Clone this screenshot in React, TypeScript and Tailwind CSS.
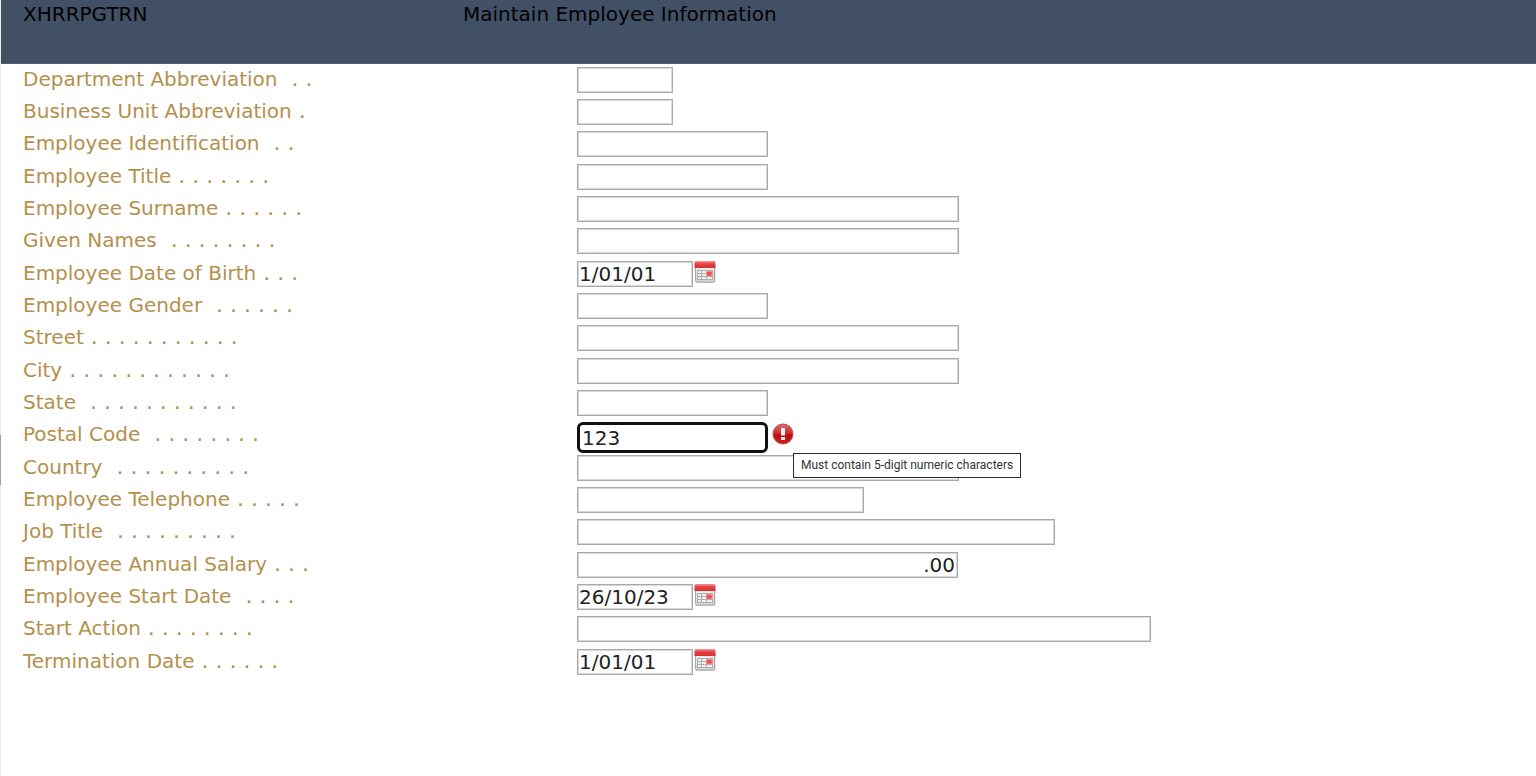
type Field = {
    id: string
    label: string
    dots: string
    width: string
    value?: string
    kind?: "date" | "amount" | "error"
}

const fields: Field[] = [
    { id: "department", label: "Department Abbreviation", dots: "  . .", width: "w-24" },
    { id: "businessUnit", label: "Business Unit Abbreviation", dots: " .", width: "w-24" },
    { id: "employeeId", label: "Employee Identification", dots: "  . .", width: "w-[191px]" },
    { id: "title", label: "Employee Title", dots: " . . . . . . .", width: "w-[191px]" },
    { id: "surname", label: "Employee Surname", dots: " . . . . . .", width: "w-[382px]" },
    { id: "givenNames", label: "Given Names", dots: "  . . . . . . . .", width: "w-[382px]" },
    { id: "birthDate", label: "Employee Date of Birth", dots: " . . .", width: "w-[116px]", value: "1/01/01", kind: "date" },
    { id: "gender", label: "Employee Gender", dots: "  . . . . . .", width: "w-[191px]" },
    { id: "street", label: "Street", dots: " . . . . . . . . . . .", width: "w-[382px]" },
    { id: "city", label: "City", dots: " . . . . . . . . . . . .", width: "w-[382px]" },
    { id: "state", label: "State", dots: "  . . . . . . . . . . .", width: "w-[191px]" },
    { id: "postalCode", label: "Postal Code", dots: "  . . . . . . . .", width: "w-[191px]", value: "123", kind: "error" },
    { id: "country", label: "Country", dots: "  . . . . . . . . . .", width: "w-[382px]" },
    { id: "telephone", label: "Employee Telephone", dots: " . . . . .", width: "w-[287px]" },
    { id: "jobTitle", label: "Job Title", dots: "  . . . . . . . . .", width: "w-[478px]" },
    { id: "salary", label: "Employee Annual Salary", dots: " . . .", width: "w-[381px]", value: ".00", kind: "amount" },
    { id: "startDate", label: "Employee Start Date", dots: "  . . . .", width: "w-[116px]", value: "26/10/23", kind: "date" },
    { id: "startAction", label: "Start Action", dots: " . . . . . . . .", width: "w-[574px]" },
    { id: "terminationDate", label: "Termination Date", dots: " . . . . . .", width: "w-[116px]", value: "1/01/01", kind: "date" },
]

const CalendarIcon = () => (
    <svg viewBox="0 0 22 24" className="w-[22px] h-6" aria-hidden="true">
        <defs>
            <linearGradient id="calTop" x1="0" y1="0" x2="0" y2="1">
                <stop offset="0" stopColor="#f29a9a" />
                <stop offset="0.4" stopColor="#e34545" />
                <stop offset="1" stopColor="#d92c2c" />
            </linearGradient>
            <linearGradient id="calBody" x1="0" y1="0" x2="0" y2="1">
                <stop offset="0" stopColor="#f8f8f8" />
                <stop offset="1" stopColor="#d4d4d4" />
            </linearGradient>
        </defs>
        <rect x="1" y="4" width="20.500" height="19" rx="2" fill="#cfcfcf" />
        <rect x="1.500" y="2.500" width="19" height="19.500" rx="2" fill="url(#calBody)" stroke="#aaa6a6" />
        <path d="M0.500 8V2.500Q0.500 1 2 1H20Q21.500 1 21.500 2.500V8Z" fill="url(#calTop)" />
        <rect x="3" y="10" width="16" height="10" fill="#b0adad" />
        <path d="M4 11h3v2H4zM8 11h4v2H8zM4 14h3v2H4zM8 14h4v2H8zM4 17h3v2H4zM8 17h4v2H8zM13 17h5v2H13z" fill="#f0f0f0" />
        <rect x="12.500" y="11.500" width="5.500" height="4.500" fill="#ef5050" stroke="#f29090" />
    </svg>
)

const ErrorIcon = () => (
    <svg viewBox="0 0 22 22" className="w-[22px] h-[22px]" role="img" aria-labelledby="postalCodeError">
        <defs>
            <linearGradient id="errFill" x1="0" y1="0" x2="0" y2="1">
                <stop offset="0" stopColor="#d97070" />
                <stop offset="0.45" stopColor="#c93030" />
                <stop offset="0.55" stopColor="#bd0f0f" />
                <stop offset="1" stopColor="#cf2020" />
            </linearGradient>
        </defs>
        <circle cx="11" cy="11" r="10" fill="url(#errFill)" stroke="#bf4a4a" />
        <path d="M9 5h4v7.500H9zM9 14h4v3H9z" fill="#fbeeee" />
    </svg>
)

const inputLook = (kind?: Field["kind"]) => {
    if (kind === "error") return "h-[31px] border-[3px] border-[#101010] rounded-md px-[2px]"
    if (kind === "amount") return "h-[26px] border border-[#a9a9a9] inset-ring inset-ring-[#d8d8d8] text-right px-[2px]"
    return "h-[26px] border border-[#a9a9a9] inset-ring inset-ring-[#d8d8d8] px-px"
}

const Row = ({ id, label, dots, width, value, kind }: Field) => (
    <div className="flex h-8 nth-[3n]:h-[33px]">
        <label htmlFor={id} className="w-[554px] shrink-0 whitespace-pre leading-[30px] text-[#b58f4c]">
            {label}<span className="text-[22px]">{dots}</span>
        </label>
        <div className="relative flex items-start pt-[3px]">
            <input
                id={id}
                type="text"
                defaultValue={value}
                aria-invalid={kind === "error"}
                className={`bg-white text-[#222] outline-none ${width} ${inputLook(kind)}`}
            />
            {kind === "date" && (
                <button type="button" aria-label={`Choose ${label}`} className="ml-px -mt-px">
                    <CalendarIcon />
                </button>
            )}
            {kind === "error" && (
                <>
                    <span className="ml-1 mt-px"><ErrorIcon /></span>
                    <div
                        id="postalCodeError"
                        role="tooltip"
                        className="absolute left-[216px] top-[34px] z-10 h-[25px] border border-[#2b2b2b] bg-white px-[7px] font-[Roboto,sans-serif] text-xs leading-[23px] whitespace-nowrap text-[#333]"
                    >
                        Must contain 5-digit numeric characters
                    </div>
                </>
            )}
        </div>
    </div>
)

const App = () => {
    return (
        <div className="relative min-h-screen border-l border-[#ececec] bg-white font-['DejaVu_Sans',Verdana,sans-serif] text-xl">
            {/* splitter handle on the window edge */}
            <div className="absolute -left-px top-[435px] h-[50px] w-px bg-[#a0a0a0]" />
            <header className="flex h-16 border-b border-[#4f5e77] bg-[#425066] pl-[22px] leading-7 text-black">
                <span className="w-[440px] shrink-0">XHRRPGTRN</span>
                <h1>Maintain Employee Information</h1>
            </header>
            <form className="flex flex-col pl-[22px]">
                {fields.map((field) => <Row key={field.id} {...field} />)}
            </form>
        </div>
    )
}

export default App
